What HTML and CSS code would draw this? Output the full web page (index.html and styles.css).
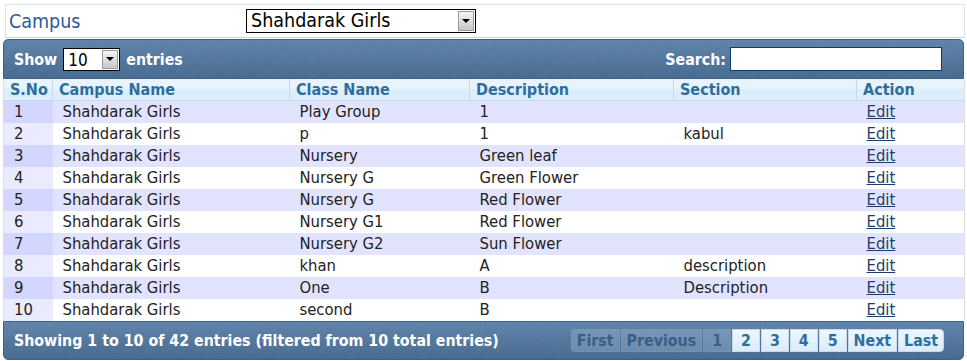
FILE: index.html
```html
<!DOCTYPE html>
<html>
<head>
  <title>Classes</title>
  <link rel="stylesheet" href="styles.css">
</head>
<body>
  <div class="campus-bar">
    <label class="campus-label">Campus</label>
    <div class="fake-select campus-select">
      <span class="fake-select-text">Shahdarak Girls</span>
      <span class="fake-select-btn"><span class="arrow"></span></span>
    </div>
  </div>

  <div class="dt-wrapper">
    <!-- Top toolbar -->
    <div class="dt-toolbar dt-toolbar-top">
      <div class="dt-length">
        Show
        <div class="fake-select length-select">
          <span class="fake-select-text">10</span>
          <span class="fake-select-btn"><span class="arrow"></span></span>
        </div>
        entries
      </div>
      <div class="dt-filter">
        Search: <input class="search-input" type="text">
      </div>
    </div>

    <table class="dt-table">
      <colgroup>
        <col style="width:49px">
        <col style="width:237px">
        <col style="width:180px">
        <col style="width:204px">
        <col style="width:183px">
        <col style="width:108px">
      </colgroup>
      <thead>
        <tr>
          <th>S.No</th>
          <th>Campus Name</th>
          <th>Class Name</th>
          <th>Description</th>
          <th>Section</th>
          <th>Action</th>
        </tr>
      </thead>
      <tbody>
        <tr class="odd"><td class="sorting">1</td><td>Shahdarak Girls</td><td>Play Group</td><td>1</td><td></td><td><a href="#">Edit</a></td></tr>
        <tr class="even"><td class="sorting">2</td><td>Shahdarak Girls</td><td>p</td><td>1</td><td>kabul</td><td><a href="#">Edit</a></td></tr>
        <tr class="odd"><td class="sorting">3</td><td>Shahdarak Girls</td><td>Nursery</td><td>Green leaf</td><td></td><td><a href="#">Edit</a></td></tr>
        <tr class="even"><td class="sorting">4</td><td>Shahdarak Girls</td><td>Nursery G</td><td>Green Flower</td><td></td><td><a href="#">Edit</a></td></tr>
        <tr class="odd"><td class="sorting">5</td><td>Shahdarak Girls</td><td>Nursery G</td><td>Red Flower</td><td></td><td><a href="#">Edit</a></td></tr>
        <tr class="even"><td class="sorting">6</td><td>Shahdarak Girls</td><td>Nursery G1</td><td>Red Flower</td><td></td><td><a href="#">Edit</a></td></tr>
        <tr class="odd"><td class="sorting">7</td><td>Shahdarak Girls</td><td>Nursery G2</td><td>Sun Flower</td><td></td><td><a href="#">Edit</a></td></tr>
        <tr class="even"><td class="sorting">8</td><td>Shahdarak Girls</td><td>khan</td><td>A</td><td>description</td><td><a href="#">Edit</a></td></tr>
        <tr class="odd"><td class="sorting">9</td><td>Shahdarak Girls</td><td>One</td><td>B</td><td>Description</td><td><a href="#">Edit</a></td></tr>
        <tr class="even"><td class="sorting">10</td><td>Shahdarak Girls</td><td>second</td><td>B</td><td></td><td><a href="#">Edit</a></td></tr>
      </tbody>
    </table>

    <!-- Bottom toolbar -->
    <div class="dt-toolbar dt-toolbar-bottom">
      <div class="dt-info">Showing 1 to 10 of 42 entries (filtered from 10 total entries)</div>
      <div class="dt-paginate">
        <span class="pg-btn disabled first">First</span>
        <span class="pg-btn disabled">Previous</span>
        <span class="pg-btn num disabled">1</span>
        <span class="pg-btn num">2</span>
        <span class="pg-btn num">3</span>
        <span class="pg-btn num">4</span>
        <span class="pg-btn num">5</span>
        <span class="pg-btn">Next</span>
        <span class="pg-btn last">Last</span>
      </div>
    </div>
  </div>
</body>
</html>
```

FILE: styles.css
```css
body {
  margin: 0;
  padding: 0;
  background: #ffffff;
  font-family: "DejaVu Sans Condensed", "DejaVu Sans", sans-serif;
  font-size: 16.5px;
  color: #222222;
}

/* Campus selector row */
.campus-bar {
  display: flex;
  align-items: center;
  height: 32px;
  margin: 4px 2px 0 5px;
  border: 1px solid #dde3ec;
  border-bottom-color: #d0d4da;
}

.campus-label {
  width: 237px;
  padding-left: 3px;
  font-size: 19.5px;
  color: #2b5a96;
}

.fake-select {
  display: flex;
  align-items: stretch;
  border: 1px solid #000000;
  background: #ffffff;
  box-sizing: border-box;
}

.fake-select-text {
  flex: 1;
  padding-left: 4px;
  line-height: 22px;
  color: #000000;
}

.fake-select-btn {
  width: 16px;
  margin: 1px;
  display: flex;
  align-items: center;
  justify-content: center;
  background: linear-gradient(#f4f4f4, #c8c8c8);
  border: 1px solid #9a9a9a;
  box-sizing: border-box;
}

.arrow {
  width: 0;
  height: 0;
  border-left: 4px solid transparent;
  border-right: 4px solid transparent;
  border-top: 4px solid #000000;
}

.campus-select {
  width: 230px;
  height: 24px;
  font-size: 19.5px;
}

/* DataTable wrapper */
.dt-wrapper {
  margin: 1px 3px 0 3px;
  width: 961px;
}

.dt-toolbar {
  display: flex;
  justify-content: space-between;
  align-items: center;
  color: #ffffff;
  font-weight: bold;
  font-size: 15.8px;
  border: 1px solid #3f628a;
  background:
    repeating-linear-gradient(135deg, rgba(255,255,255,0.05) 0 1px, transparent 1px 3px),
    linear-gradient(#5f82a9, #46698f);
}

.dt-toolbar-top {
  height: 38px;
  padding: 0 21px 0 10px;
  border-radius: 5px 5px 0 0;
}

.dt-toolbar-bottom {
  height: 37px;
  padding: 0 19px 0 10px;
  border-radius: 0 0 5px 5px;
}

.dt-length {
  display: flex;
  align-items: center;
  gap: 6px;
}

.length-select {
  width: 57px;
  height: 23px;
  font-weight: normal;
  font-size: 17px;
}

.dt-filter {
  display: flex;
  align-items: center;
  gap: 4px;
}

.search-input {
  width: 212px;
  height: 24px;
  box-sizing: border-box;
  border: 1px solid #0d3d6b;
  margin: 0;
  padding: 0 3px;
}

/* Table */
.dt-table {
  width: 961px;
  border-collapse: collapse;
  table-layout: fixed;
  border-left: 1px solid #dcdcdc;
  border-right: 1px solid #dcdcdc;
}

.dt-table th {
  height: 21px;
  padding: 0 0 0 6px;
  text-align: left;
  font-size: 16px;
  color: #2e6e9e;
  font-weight: bold;
  background: linear-gradient(#e8f3fc 0 50%, #dceefb 50% 100%);
  border-right: 1px solid #c5dbec;
  border-bottom: 1px solid #c5dbec;
}

.dt-table th:last-child {
  border-right: none;
}

.dt-table td {
  height: 22px;
  padding: 0 0 1px 10px;
  box-sizing: border-box;
  white-space: nowrap;
}

.dt-table tr.odd td {
  background: #e2e4ff;
}

.dt-table tr.even td {
  background: #ffffff;
}

.dt-table tr.odd td.sorting {
  background: #d3d6ff;
}

.dt-table tr.even td.sorting {
  background: #eaebff;
}

.dt-table a {
  color: #1c3c6c;
}

/* Pagination */
.dt-paginate {
  display: flex;
}

.pg-btn {
  height: 21px;
  line-height: 21px;
  padding: 0 5px;
  margin-left: 1px;
  color: #2e6e9e;
  background: linear-gradient(#eef6fd, #dcecfa);
  border: 1px solid #c5dbec;
}

.pg-btn.num {
  padding: 0 8px;
}

.pg-btn.disabled {
  color: #3a5f86;
  background: rgba(200, 220, 240, 0.25);
  border-color: rgba(120, 150, 185, 0.6);
}

.pg-btn.first {
  margin-left: 0;
  border-radius: 4px 0 0 4px;
}

.pg-btn.last {
  border-radius: 0 4px 4px 0;
}
```
